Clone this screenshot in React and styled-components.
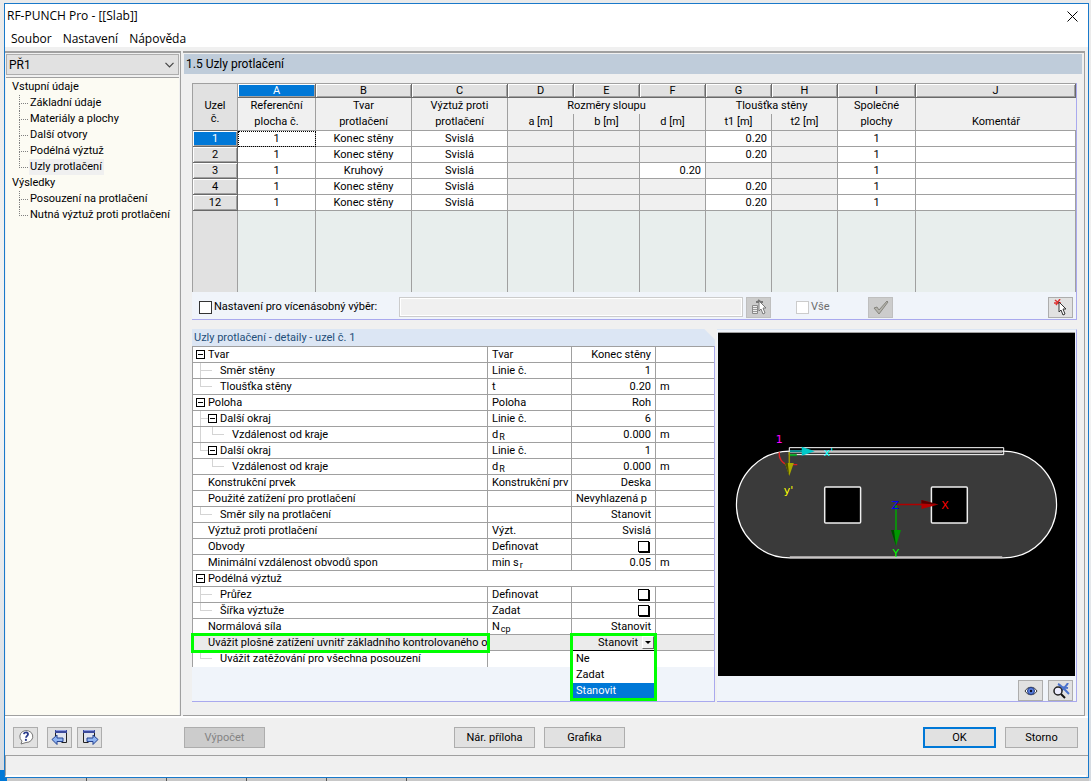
import React from 'react';
import styled, { createGlobalStyle, css } from 'styled-components';

const GlobalStyle = createGlobalStyle`
    *, *::before, *::after { box-sizing: border-box; }
    body {
        margin: 0;
        background: #e9eaeb;
        color: #000;
        font: 11px/16px Roboto, "Liberation Sans", sans-serif;
    }
    button, input, select { font: inherit; color: inherit; margin: 0; }
    table { border-spacing: 0; border-collapse: separate; table-layout: fixed; width: 100%; }
    th { font-weight: normal; }
`;

const Desktop = styled.div`
    display: flex;
    flex-direction: column;
    height: 100vh;
    padding: 3px 2px 0 4px;
    background:
        linear-gradient(#0078d7, #0078d7) 0 100% / 8px 11px no-repeat,
        linear-gradient(#eaeaea 0, #f4f4f4 50%, #d5dbe2 100%);
`;

const Dialog = styled.main`
    flex: 1;
    min-height: 0;
    display: flex;
    flex-direction: column;
    border: 1px solid #1979ca;
    background: #f0f0f0;
`;

const TitleBar = styled.header`
    display: flex;
    justify-content: space-between;
    align-items: center;
    height: 24px;
    padding: 0 10px 0 2px;
    background: #fff;
    font: 12px/16px "Open Sans", "Noto Sans", sans-serif;
    h1 { margin: 0; font: inherit; }
`;

const CloseButton = styled.button`
    display: flex;
    padding: 0;
    border: 0;
    background: none;
`;

const MenuBar = styled.nav`
    display: flex;
    gap: 11px;
    height: 19px;
    padding: 0 6px;
    background: #fff;
    font: 12px/22px "Open Sans", "Noto Sans", sans-serif;
`;

const MenuLink = styled.a`
    color: inherit;
    text-decoration: none;
`;

const Body = styled.div`
    flex: 1;
    min-height: 0;
    display: grid;
    grid-template-columns: 176px minmax(0, 1fr);
    gap: 2px;
    margin-top: 4px;
    padding-right: 3px;
    border-bottom: 2px solid #fff;
`;

const Sidebar = styled.aside`
    display: flex;
    flex-direction: column;
    border-top: 2px solid #a0a0a0;
    border-right: 1px solid #a0a0a0;
    border-bottom: 1px solid #a0a0a0;
    padding: 1px 1px 0 1px;
    background: #f0f0f0;
`;

const CaseSelect = styled.div`
    display: flex;
    align-items: center;
    height: 21px;
    padding-right: 4px;
    border: 1px solid #adadad;
    background: #e1e1e1;
    select {
        flex: 1;
        appearance: none;
        border: 0;
        padding: 0 2px;
        background: transparent;
        font-size: 12px;
    }
`;

const Tree = styled.ul`
    flex: 1;
    margin: 2px 0 0;
    padding: 1px 0 0 6px;
    border-top: 1px solid #a0a0a0;
    background: #fcfbf3;
    list-style: none;
    font-size: 11px;
    ul { margin: 0; padding: 0 0 0 7px; list-style: none; }
`;

const TreeLink = styled.a`
    padding: 0 2px 0 1px;
    color: inherit;
    text-decoration: none;
    background: ${p => (p.$active ? '#f0f0f0' : 'none')};
`;

const TreeItem = styled.li`
    display: flex;
`;

const Branch = styled.span`
    display: flex;
    flex-direction: column;
    width: 9px;
    margin-right: 1px;
    &::before {
        content: "";
        height: 9px;
        border-left: 1px dotted #808080;
        border-bottom: 1px dotted #808080;
    }
    &::after {
        content: "";
        height: 7px;
        border-left: ${p => (p.$last ? 'none' : '1px dotted #808080')};
    }
`;

const Content = styled.section`
    display: flex;
    flex-direction: column;
    min-height: 0;
    border-top: 2px solid #a0a0a0;
    border-right: 1px solid #a0a0a0;
    border-bottom: 1px solid #a0a0a0;
    padding: 1px 2px 13px 1px;
`;

const Heading = styled.h2`
    margin: 0 0 9px;
    padding: 0 2px;
    background: #bfccda;
    font: 12px/20px Roboto, "Liberation Sans", sans-serif;
`;

const GridPanel = styled.div`
    margin: 0 5px 0 8px;
    border-right: 1px solid #a9a9ee;
    border-bottom: 1px solid #a9a9ee;
    background: #f0f4fa;
`;

const NodeTable = styled.table`
    border-left: 1px solid #a0a0a0;
    border-top: 1px solid #a0a0a0;
    font-size: 11px;
    line-height: 15px;
    th, td { padding: 0; white-space: nowrap; overflow: hidden; text-align: center; }
`;

const Letter = styled.th`
    height: 14px;
    line-height: 13px;
    border-right: 1px solid #696969;
    border-bottom: 1px solid #696969;
    box-shadow: inset 1px 1px #fff, inset -1px -1px #a0a0a0;
    background: ${p => (p.$on ? '#0078d7' : '#e1e1e1')};
    color: ${p => (p.$on ? '#fff' : '#000')};
`;

const ColHead = styled.th`
    height: ${p => (p.$sub ? 17 : 16)}px;
    border-right: ${p => (p.$open ? 'none' : '1px solid #a0a0a0')};
    border-bottom: ${p => (p.$sub ? '1px solid #a0a0a0' : 'none')};
    background: #f0f0f0;
    vertical-align: top;
`;

const CornerHead = styled.th`
    border-right: 1px solid #a0a0a0;
    border-bottom: 1px solid #696969;
    background: #e1e1e1;
    line-height: 13px;
    && { padding-top: 10px; white-space: pre-line; }
`;

const RowHead = styled.th`
    height: 16px;
    line-height: 14px;
    border-right: 1px solid #696969;
    border-bottom: 1px solid #696969;
    box-shadow: inset 1px 1px #fff, inset -1px -1px #a0a0a0;
    background: ${p => (p.$on ? '#0078d7' : '#e1e1e1')};
    color: ${p => (p.$on ? '#fff' : '#000')};
`;

const Cell = styled.td`
    height: 16px;
    border-right: 1px solid #a0a0a0;
    border-bottom: 1px solid #a0a0a0;
    background: ${p => (p.$off ? '#f0f0f0' : '#fff')};
    ${p => p.$num && css`
        && { text-align: right; padding-right: 4px; }
    `}
    ${p => p.$focus && css`
        outline: 1px dotted #000;
        outline-offset: -1px;
    `}
`;

const FillCell = styled.td`
    height: 81px;
    border-right: 1px solid #a0a0a0;
    background: ${p => (p.$head ? '#e1e1e1' : '#e8eeed')};
`;

const MultiBar = styled.div`
    display: flex;
    align-items: center;
    height: 27px;
    padding: 3px 3px 0 7px;
    label { display: flex; align-items: center; gap: 2px; font-size: 11px; }
`;

const MultiLabel = styled.label`
    width: 200px;
`;

const Tick = styled.input`
    appearance: none;
    width: 13px;
    height: 13px;
    border: 1px solid ${p => (p.disabled ? '#ccc' : '#333')};
    background: #fff;
`;

const MultiInput = styled.input`
    flex: 1;
    min-width: 0;
    height: 20px;
    margin-right: 3px;
    border: 1px solid #ccc;
    box-shadow: inset 0 0 0 1px #fff;
    background: #f0f0f0;
`;

const AllLabel = styled.label`
    width: 72px;
    margin-left: 25px;
    color: #6d6d6d;
`;

const Spacer = styled.span`
    width: 155px;
`;

const IconButton = styled.button`
    display: flex;
    align-items: center;
    justify-content: center;
    width: 25px;
    height: 21px;
    padding: 0;
    border: 1px solid ${p => (p.disabled ? '#bfbfbf' : '#adadad')};
    background: ${p => (p.disabled ? '#ccc' : '#e1e1e1')};
`;

const Lower = styled.div`
    flex: 1;
    min-height: 0;
    display: grid;
    grid-template-columns: minmax(0, 523fr) minmax(0, 360fr);
    gap: 2px;
    margin: 9px 5px 0 8px;
`;

const Details = styled.div`
    display: flex;
    flex-direction: column;
    border-right: 1px solid #a9a9ee;
    border-bottom: 1px solid #a9a9ee;
    background: #f0f4fa;
`;

const DetailsTitle = styled.h3`
    margin: 0 -1px 0 0;
    padding: 0 2px;
    background: linear-gradient(225deg, #f0f0f0 7px, #dce6f4 8px);
    color: #1f4e79;
    font: 11px/17px Roboto, "Liberation Sans", sans-serif;
`;

const DetailTable = styled.table`
    border-left: 1px solid #a0a0a0;
    border-top: 1px solid #a0a0a0;
    background: #fff;
    font-size: 11px;
    line-height: 15px;
    td, th {
        height: 16px;
        padding: 0 4px;
        border-right: 1px solid #a0a0a0;
        border-bottom: 1px solid #a0a0a0;
        text-align: left;
        vertical-align: top;
        white-space: nowrap;
        overflow: hidden;
    }
    td:last-child { border-right: 0; }
    tr:last-child > * { border-bottom: 0; }
    sub { font-size: 9px; line-height: 8px; vertical-align: -2px; margin-left: 1px; }
`;

const DetailRow = styled.tr`
    && > * { ${p => p.$active && 'background: #ebebeb;'} }
    && > :nth-child(1) { padding: 0 0 0 3px; }
    && > :nth-child(3) { text-align: ${p => (p.$left ? 'left' : 'right')}; }
    ${p => p.$wide && css`
        && > * { border-right: 0; }
    `}
    ${p => p.$active && css`
        && > :nth-child(1) { outline: 3px solid #0f0; outline-offset: -1px; }
        && > :nth-child(3) { position: relative; overflow: visible; padding: 0; }
    `}
`;

const NameCell = styled.div`
    display: flex;
    height: 15px;
`;

const Slot = styled.span`
    flex: none;
    width: 12px;
    display: flex;
    flex-direction: column;
    padding-left: ${p => (p.$kind === '-' ? 0 : 4)}px;
    ${p => 'EL'.includes(p.$kind) && css`
        &::before {
            content: "";
            height: 8px;
            border-left: 1px solid #d4d4d4;
            border-bottom: 1px solid #d4d4d4;
        }
    `}
    ${p => 'EI'.includes(p.$kind) && css`
        &::after {
            content: "";
            flex: 1;
            border-left: 1px solid #d4d4d4;
        }
    `}
    ${p => p.$kind === '-' && css`
        &::before {
            content: "";
            width: 4px;
            height: 8px;
            border-bottom: 1px solid #d4d4d4;
        }
    `}
`;

const Toggle = styled.button`
    flex: none;
    display: flex;
    align-items: center;
    justify-content: center;
    width: 9px;
    height: 9px;
    margin: 3px 3px 0 0;
    padding: 0;
    border: 1px solid #000;
    background: #fff;
    &::before { content: ""; width: 5px; height: 1px; background: #000; }
`;

const EditButton = styled.button`
    display: block;
    width: 11px;
    height: 11px;
    margin: 2px 2px 0 auto;
    padding: 0;
    border: 1px solid #000;
    background: #fff;
    box-shadow: 1px 1px #000;
`;

const Combo = styled.div`
    position: absolute;
    z-index: 1;
    top: -2px;
    left: -2px;
    right: -2px;
    border: 3px solid #0f0;
    background: #fff;
    text-align: left;
`;

const ComboField = styled.div`
    display: flex;
    height: 15px;
    border-bottom: 1px solid #000;
    background: #ebebeb;
    select {
        flex: 1;
        min-width: 0;
        appearance: none;
        border: 0;
        padding: 0 4px 0 0;
        background: transparent;
        line-height: 14px;
        text-align: right;
        text-align-last: right;
    }
`;

const ComboArrow = styled.button`
    width: 12px;
    height: 13px;
    padding: 0;
    border: 1px solid #fff;
    border-right-color: #696969;
    border-bottom-color: #696969;
    background: #f0f0f0;
    display: flex;
    align-items: center;
    justify-content: center;
    &::before {
        content: "";
        border: 3px solid transparent;
        border-top-color: #000;
        border-bottom: 0;
    }
`;

const Options = styled.ul`
    margin: 0;
    padding: 0;
    list-style: none;
    li { padding: 0 3px; line-height: 16px; height: 16px; }
    li[aria-selected="true"] { height: 15px; background: #0078d7; color: #fff; }
`;

const Viewer = styled.div`
    display: flex;
    flex-direction: column;
    min-height: 0;
    padding: 2px 1px 0;
    border-top: 1px solid #dce6f4;
    border-right: 1px solid #a9a9ee;
    border-bottom: 1px solid #a9a9ee;
    background: #f0f4fa;
`;

const Scene = styled.svg`
    flex: 1;
    min-height: 0;
    width: 100%;
    border-top: 1px solid #a0a0a0;
    background: #000;
    font-family: "DejaVu Sans", sans-serif;
    font-size: 11px;
`;

const ViewerBar = styled.div`
    display: flex;
    justify-content: flex-end;
    gap: 5px;
    padding: 4px 2px 0 0;
`;

const Footer = styled.footer`
    display: grid;
    grid-template-columns: 171px 270px 1fr auto;
    align-items: center;
    height: 38px;
    padding: 1px 10px 0 8px;
    border-bottom: 1px solid #a0a0a0;
`;

const ButtonGroup = styled.div`
    display: flex;
    gap: ${p => p.$gap || 9}px;
`;

const HelpButton = styled(IconButton)`
    margin-right: 4px;
`;

const PushButton = styled.button`
    width: ${p => p.$width || 81}px;
    height: 21px;
    padding: ${p => (p.$primary ? 1 : 2)}px 0 0;
    border: ${p => (p.$primary ? '2px solid #0078d7' : '1px solid #adadad')};
    background: ${p => (p.disabled ? '#ccc' : '#e1e1e1')};
    color: ${p => (p.disabled ? '#838383' : '#000')};
    font-size: 11px;
    line-height: 16px;
`;

const StatusBar = styled.div`
    height: 21px;
    margin-right: 2px;
    border-left: 1px solid #a0a0a0;
    border-bottom: 2px solid #fff;
`;

const SheetEdge = styled.div`
    display: flex;
    height: 3px;
    margin-left: 3px;
    background: #c8c8c8;
    span {
        width: 80px;
        border-right: 1px solid #555;
    }
`;

const caseTree = [
    { title: 'Vstupní údaje', items: ['Základní údaje', 'Materiály a plochy', 'Další otvory', 'Podélná výztuž', 'Uzly protlačení'] },
    { title: 'Výsledky', items: ['Posouzení na protlačení', 'Nutná výztuž proti protlačení'] },
];

const letters = ['A', 'B', 'C', 'D', 'E', 'F', 'G', 'H', 'I', 'J'];
const colWidths = [45, 78, 96, 96, 66, 66, 66, 66, 66, 78];

const nodes = [
    { id: 1, shape: 'Konec stěny', t1: '0.20' },
    { id: 2, shape: 'Konec stěny', t1: '0.20' },
    { id: 3, shape: 'Kruhový', d: '0.20' },
    { id: 4, shape: 'Konec stěny', t1: '0.20' },
    { id: 12, shape: 'Konec stěny', t1: '0.20' },
];

// slots: T toggle, E tee, L elbow, I pass-through line, - end of a branch
const details = [
    { slots: 'T', name: 'Tvar', sym: 'Tvar', value: 'Konec stěny' },
    { slots: 'E-', name: 'Směr stěny', sym: 'Linie č.', value: '1' },
    { slots: 'L-', name: 'Tloušťka stěny', sym: 't', value: '0.20', unit: 'm' },
    { slots: 'T', name: 'Poloha', sym: 'Poloha', value: 'Roh' },
    { slots: 'ET', name: 'Další okraj', sym: 'Linie č.', value: '6' },
    { slots: 'IL-', name: 'Vzdálenost od kraje', sym: <>d<sub>R</sub></>, value: '0.000', unit: 'm' },
    { slots: 'LT', name: 'Další okraj', sym: 'Linie č.', value: '1' },
    { slots: ' L-', name: 'Vzdálenost od kraje', sym: <>d<sub>R</sub></>, value: '0.000', unit: 'm' },
    { slots: ' ', name: 'Konstrukční prvek', sym: 'Konstrukční prv', value: 'Deska' },
    { slots: ' ', name: 'Použité zatížení pro protlačení', value: 'Nevyhlazená p', left: true },
    { slots: 'L-', name: 'Směr síly na protlačení', value: 'Stanovit' },
    { slots: ' ', name: 'Výztuž proti protlačení', sym: 'Výzt.', value: 'Svislá' },
    { slots: ' ', name: 'Obvody', sym: 'Definovat', edit: true },
    { slots: ' ', name: 'Minimální vzdálenost obvodů spon', sym: <>min s<sub>r</sub></>, value: '0.05', unit: 'm' },
    { slots: 'T', name: 'Podélná výztuž', wide: true },
    { slots: 'E-', name: 'Průřez', sym: 'Definovat', edit: true },
    { slots: 'L-', name: 'Šířka výztuže', sym: 'Zadat', edit: true },
    { slots: ' ', name: 'Normálová síla', sym: <>N<sub>cp</sub></>, value: 'Stanovit' },
    { slots: ' ', name: 'Uvážit plošné zatížení uvnitř základního kontrolovaného o', combo: true },
    { slots: 'L-', name: 'Uvážit zatěžování pro všechna posouzení' },
];

const options = ['Ne', 'Zadat', 'Stanovit'];

function Cursor({ x, y, color = '#333' }) {
    return <path transform={`translate(${x} ${y})`} d="M0 0v10l2-2 2 5 2-1-2-5h3z" fill="#fff" stroke={color} />;
}

function WindowIcon({ flip }) {
    return (
        <svg width="18" height="16" viewBox="0 0 18 16">
            <g transform={flip ? 'translate(18 0) scale(-1 1)' : undefined}>
                <path d="M4.500 1.500h11v12h-11z" fill="#dfe3ee" />
                <path d="M4 1h12v3h-12z" fill="#3c4a9c" />
                <path d="M5 1.500h10" stroke="#8d9be0" />
                <path d="M15.500 4v9.500h-5M4.500 4v3" fill="none" stroke="#222" />
                <path d="M1 10.500l5-4.500v3h6v3.500h-6v3z" fill="#8fb4f2" stroke="#23408f" />
            </g>
        </svg>
    );
}

function Navigator() {
    return (
        <Sidebar>
            <CaseSelect>
                <select aria-label="PŘ1" defaultValue="PŘ1">
                    <option>PŘ1</option>
                </select>
                <svg width="9" height="6" viewBox="0 0 9 6">
                    <path d="M.5 .8l4 4 4-4" fill="none" stroke="#444" strokeWidth="1.200" />
                </svg>
            </CaseSelect>
            <Tree>
                {caseTree.map(group => (
                    <li key={group.title}>
                        {group.title}
                        <ul>
                            {group.items.map((item, i) => (
                                <TreeItem key={item}>
                                    <Branch $last={i === group.items.length - 1} />
                                    <TreeLink href="#" $active={item === 'Uzly protlačení'}>{item}</TreeLink>
                                </TreeItem>
                            ))}
                        </ul>
                    </li>
                ))}
            </Tree>
        </Sidebar>
    );
}

function NodesGrid() {
    return (
        <NodeTable>
            <colgroup>
                {colWidths.map((w, i) => <col key={i} width={w} />)}
                <col />
            </colgroup>
            <thead>
                <tr>
                    <CornerHead rowSpan={3}>{'Uzel\nč.'}</CornerHead>
                    {letters.map(l => <Letter key={l} $on={l === 'A'}>{l}</Letter>)}
                </tr>
                <tr>
                    <ColHead>Referenční</ColHead>
                    <ColHead>Tvar</ColHead>
                    <ColHead>Výztuž proti</ColHead>
                    <ColHead colSpan={3}>Rozměry sloupu</ColHead>
                    <ColHead colSpan={2}>Tloušťka stěny</ColHead>
                    <ColHead>Společné</ColHead>
                    <ColHead $open />
                </tr>
                <tr>
                    <ColHead $sub>plocha č.</ColHead>
                    <ColHead $sub>protlačení</ColHead>
                    <ColHead $sub>protlačení</ColHead>
                    <ColHead $sub>a [m]</ColHead>
                    <ColHead $sub>b [m]</ColHead>
                    <ColHead $sub>d [m]</ColHead>
                    <ColHead $sub>t1 [m]</ColHead>
                    <ColHead $sub>t2 [m]</ColHead>
                    <ColHead $sub>plochy</ColHead>
                    <ColHead $sub $open>Komentář</ColHead>
                </tr>
            </thead>
            <tbody>
                {nodes.map((n, i) => (
                    <tr key={n.id}>
                        <RowHead $on={i === 0}>{n.id}</RowHead>
                        <Cell $focus={i === 0}>1</Cell>
                        <Cell>{n.shape}</Cell>
                        <Cell>Svislá</Cell>
                        <Cell $off />
                        <Cell $off />
                        <Cell $num $off={!n.d}>{n.d}</Cell>
                        <Cell $num $off={!n.t1}>{n.t1}</Cell>
                        <Cell $off />
                        <Cell>1</Cell>
                        <Cell />
                    </tr>
                ))}
                <tr>
                    <FillCell $head />
                    {letters.map(l => <FillCell key={l} />)}
                </tr>
            </tbody>
        </NodeTable>
    );
}

function MultiSelect() {
    return (
        <MultiBar>
            <MultiLabel>
                <Tick type="checkbox" />
                Nastavení pro vícenásobný výběr:
            </MultiLabel>
            <MultiInput disabled aria-label="Nastavení pro vícenásobný výběr" />
            <IconButton disabled aria-label="Výběr">
                <svg width="18" height="17" viewBox="0 0 18 17">
                    <path d="M2.500 6.500h5v8h-5z" fill="#eee" stroke="#888" />
                    <path d="M3 8.500h4M3 10.500h4M3 12.500h4" stroke="#999" />
                    <path d="M6 3h7M8 1l4 3" stroke="#777" strokeWidth="2" />
                    <Cursor x={9} y={2} color="#777" />
                </svg>
            </IconButton>
            <AllLabel>
                <Tick type="checkbox" disabled />
                Vše
            </AllLabel>
            <IconButton disabled aria-label="Použít">
                <svg width="16" height="15" viewBox="0 0 16 15">
                    <path d="M1 8l3-1 2 3 8-9 1 1-9 12z" fill="#b4b3ac" stroke="#77766f" strokeWidth=".8" />
                </svg>
            </IconButton>
            <Spacer />
            <IconButton aria-label="Vybrat v grafice">
                <svg width="16" height="17" viewBox="0 0 16 17">
                    <path d="M2 1l6 5M1 4h7M7 0l-4 6" stroke="#d33" strokeWidth="1.500" />
                    <Cursor x={6} y={3} />
                </svg>
            </IconButton>
        </MultiBar>
    );
}

function ValueCombo({ name }) {
    const [value, setValue] = React.useState('Stanovit');
    return (
        <Combo>
            <ComboField>
                <select aria-label={name} value={value} onChange={e => setValue(e.target.value)}>
                    {options.map(o => <option key={o}>{o}</option>)}
                </select>
                <ComboArrow tabIndex={-1} aria-label={name} />
            </ComboField>
            <Options role="listbox">
                {options.map(o => (
                    <li key={o} role="option" aria-selected={o === value} onClick={() => setValue(o)}>{o}</li>
                ))}
            </Options>
        </Combo>
    );
}

function Setting({ row }) {
    return (
        <DetailRow $wide={row.wide} $active={row.combo} $left={row.left}>
            <th scope="row">
                <NameCell>
                    {row.slots.split('').map((s, i) => (
                        s === 'T' ? <Toggle key={i} aria-label={row.name} /> : <Slot key={i} $kind={s} />
                    ))}
                    {row.name}
                </NameCell>
            </th>
            <td>{row.sym}</td>
            <td>
                {row.edit && <EditButton aria-label={row.name} />}
                {row.combo && <ValueCombo name={row.name} />}
                {row.value}
            </td>
            <td>{row.unit}</td>
        </DetailRow>
    );
}

function SlabScene() {
    return (
        <Scene viewBox="0 0 358 343">
            <rect x="18.500" y="118" width="321" height="107" rx="53.500" fill="#3a3a3a" stroke="#fff" strokeWidth="1.200" />
            <path d="M72 118.500h213M72 224.500h213" stroke="#c8c4c4" strokeWidth="2" />
            <path d="M71.500 114.500h215v7h-215z" fill="none" stroke="#fff" />
            <rect x="107" y="154" width="36" height="36" rx="1" fill="#000" stroke="#eee" strokeWidth="1.500" />
            <rect x="214" y="154" width="36" height="36" rx="1" fill="#000" stroke="#eee" strokeWidth="1.500" />
            <path d="M61.500 119c-1 6 3 12 9 12.500h9" fill="none" stroke="#e02020" strokeWidth="1.300" />
            <path d="M72 122h7" stroke="#00a020" strokeWidth="2" />
            <path d="M72 118h13" stroke="#008b8b" strokeWidth="2" />
            <path d="M84 113.500l13 4.500-13 4.500z" fill="#00c8c8" />
            <path d="M71.500 119v12" stroke="#9a9a00" strokeWidth="1.500" />
            <path d="M67 130h9l-4.500 13z" fill="#a8a800" />
            <path d="M67 130h3l1.500 13z" fill="#4c4c00" />
            <path d="M179 171.500h26" stroke="#b00000" strokeWidth="1.500" />
            <path d="M204 167l17 4.500-17 4.500z" fill="#b40000" />
            <path d="M204 167l17 4.500-17-1z" fill="#500" />
            <path d="M178.500 172v26" stroke="#00a800" strokeWidth="1.500" />
            <path d="M173.500 197h10l-5 16z" fill="#009800" />
            <path d="M173.500 197h3l2 16z" fill="#004800" />
            <text x="58" y="110" fill="#f0f">1</text>
            <text x="106" y="123" fill="#0ff">x'</text>
            <text x="66" y="161" fill="#ff0">y'</text>
            <text x="174" y="176" fill="#00f">Z</text>
            <text x="224" y="176" fill="#f00">X</text>
            <text x="175" y="224" fill="#0f0">Y</text>
        </Scene>
    );
}

export default function App() {
    return (
        <>
            <GlobalStyle />
            <Desktop>
                <Dialog>
                    <TitleBar>
                        <h1>RF-PUNCH Pro - [[Slab]]</h1>
                        <CloseButton aria-label="Zavřít">
                            <svg width="11" height="11" viewBox="0 0 11 11">
                                <path d="M.5 .5l10 10M10.500 .5l-10 10" stroke="#000" />
                            </svg>
                        </CloseButton>
                    </TitleBar>
                    <MenuBar>
                        {['Soubor', 'Nastavení', 'Nápověda'].map(m => <MenuLink key={m} href="#">{m}</MenuLink>)}
                    </MenuBar>
                    <Body>
                        <Navigator />
                        <Content>
                            <Heading>1.5 Uzly protlačení</Heading>
                            <GridPanel>
                                <NodesGrid />
                                <MultiSelect />
                            </GridPanel>
                            <Lower>
                                <Details>
                                    <DetailsTitle>Uzly protlačení - detaily - uzel č. 1</DetailsTitle>
                                    <DetailTable>
                                        <colgroup>
                                            <col />
                                            <col width="84" />
                                            <col width="84" />
                                            <col width="58" />
                                        </colgroup>
                                        <tbody>
                                            {details.map((row, i) => <Setting key={i} row={row} />)}
                                        </tbody>
                                    </DetailTable>
                                </Details>
                                <Viewer>
                                    <SlabScene />
                                    <ViewerBar>
                                        <IconButton aria-label="Zobrazit">
                                            <svg width="14" height="10" viewBox="0 0 14 10">
                                                <path d="M1 5c3-5 9-5 12 0-3 5-9 5-12 0z" fill="#fff" stroke="#333" />
                                                <circle cx="7" cy="5" r="3.500" fill="#5a80e0" stroke="#223a80" />
                                                <circle cx="7" cy="5" r="1.200" fill="#112" />
                                            </svg>
                                        </IconButton>
                                        <IconButton aria-label="Lupa">
                                            <svg width="18" height="16" viewBox="0 0 18 16">
                                                <path d="M6 1c4 2 6 5 11 10M16 0c-2 4-6 6-9 11M9 4l7 1" fill="none" stroke="#4a72cc" strokeWidth="2" />
                                                <circle cx="6" cy="8" r="4" fill="#eef" stroke="#222" strokeWidth="1.500" />
                                                <path d="M9 11l4 4" stroke="#111" strokeWidth="2" />
                                            </svg>
                                        </IconButton>
                                    </ViewerBar>
                                </Viewer>
                            </Lower>
                        </Content>
                    </Body>
                    <Footer>
                        <ButtonGroup $gap={5}>
                            <HelpButton aria-label="Nápověda">
                                <svg width="16" height="16" viewBox="0 0 16 16">
                                    <path d="M3 15l1-3a6.500 6 0 1 1 4 1.500z" fill="#fff" stroke="#777" />
                                    <path d="M5.800 5.200c.5-2.600 4.500-2.200 4.200.2-.2 1.500-1.900 1.500-2 3.400" fill="none" stroke="#2b3c8c" strokeWidth="1.800" />
                                    <circle cx="7.900" cy="10.900" r="1.100" fill="#2b3c8c" />
                                </svg>
                            </HelpButton>
                            <IconButton aria-label="Předchozí"><WindowIcon /></IconButton>
                            <IconButton aria-label="Další"><WindowIcon flip /></IconButton>
                        </ButtonGroup>
                        <ButtonGroup><PushButton disabled>Výpočet</PushButton></ButtonGroup>
                        <ButtonGroup>
                            <PushButton>Nár. příloha</PushButton>
                            <PushButton>Grafika</PushButton>
                        </ButtonGroup>
                        <ButtonGroup>
                            <PushButton $primary $width={73}>OK</PushButton>
                            <PushButton $width={73}>Storno</PushButton>
                        </ButtonGroup>
                    </Footer>
                    <StatusBar />
                </Dialog>
                <SheetEdge aria-hidden="true">
                    <span /><span /><span /><span /><span />
                </SheetEdge>
            </Desktop>
        </>
    );
}
